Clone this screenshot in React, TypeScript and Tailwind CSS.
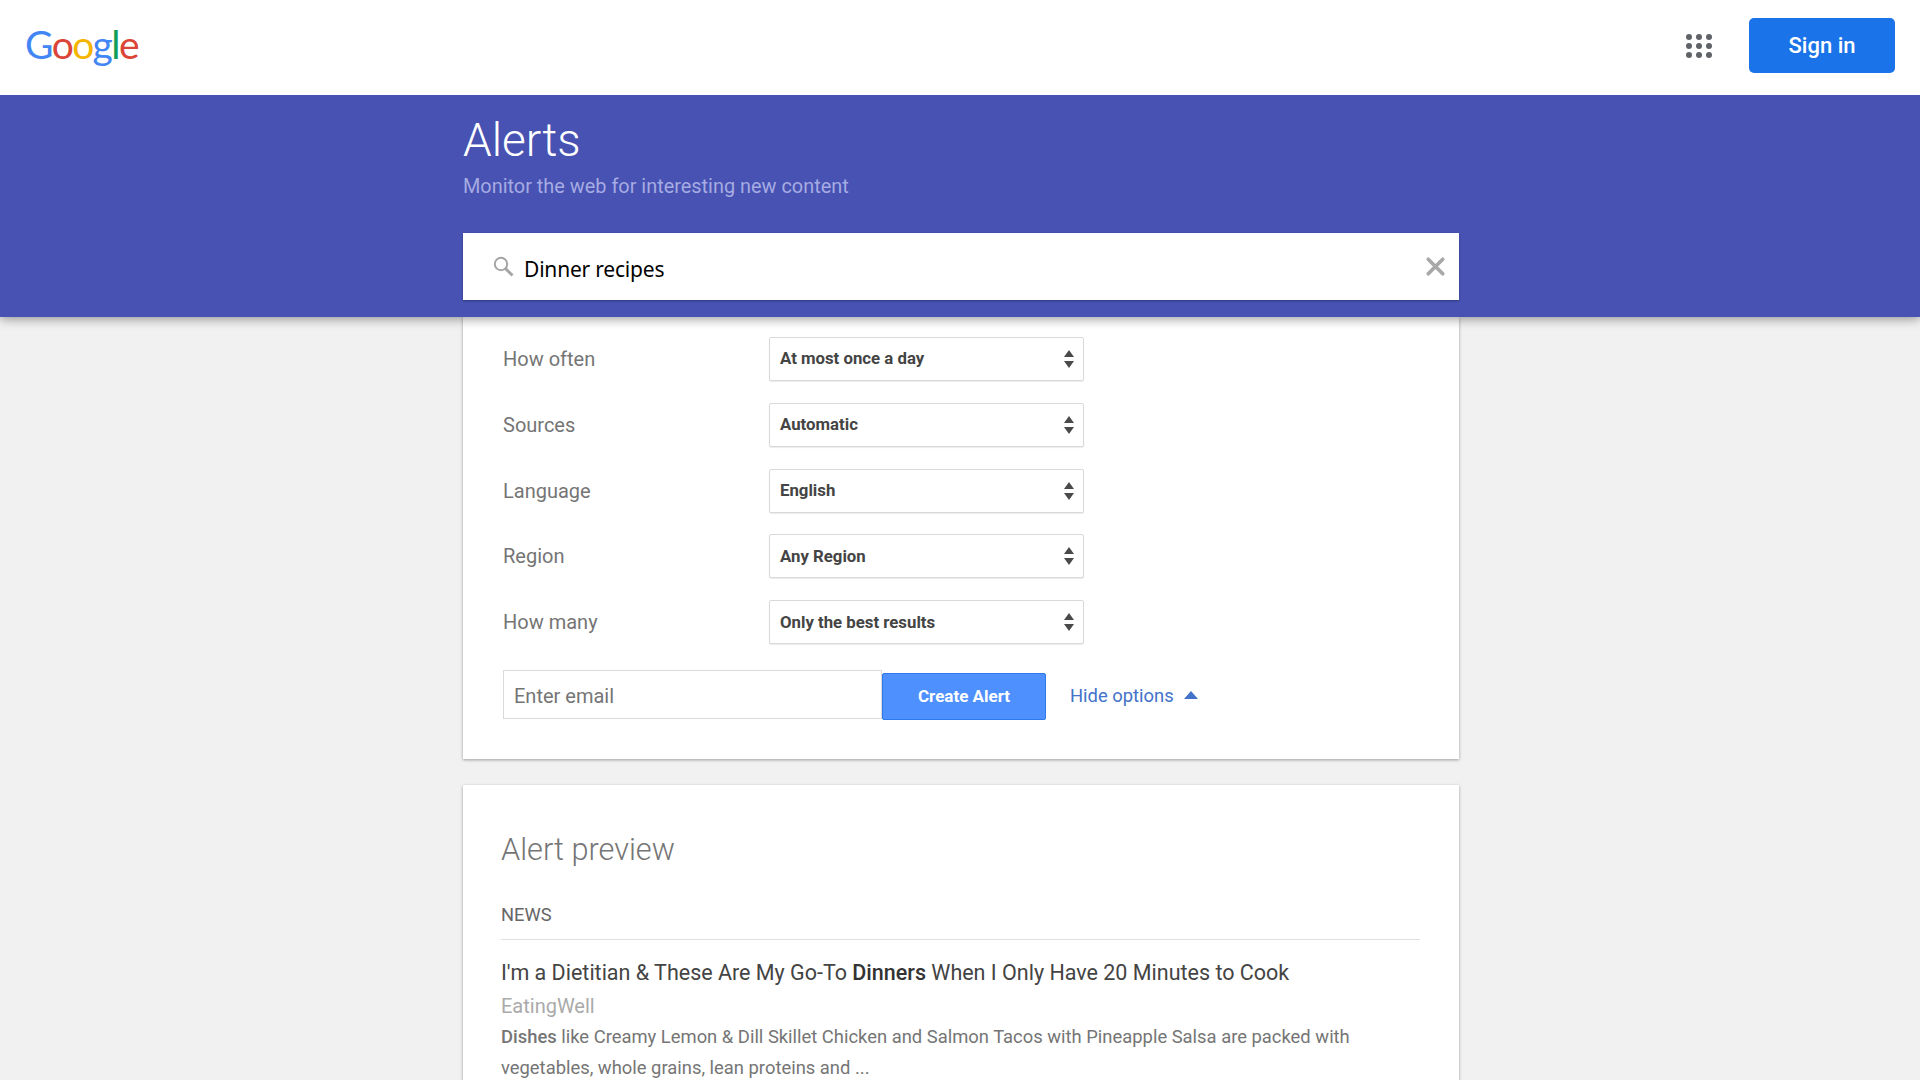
import { X } from "lucide-react"

const roboto = "font-['Roboto',sans-serif]"

const options = [
  { label: "How often", value: "At most once a day" },
  { label: "Sources", value: "Automatic" },
  { label: "Language", value: "English" },
  { label: "Region", value: "Any Region" },
  { label: "How many", value: "Only the best results" },
]

function GoogleLogo() {
  return (
    <div className="-mt-[3px] text-[39px] leading-none tracking-[-1.6px] font-['Lato',sans-serif] select-none">
      <span className="text-[#4285f4]">G</span>
      <span className="text-[#db4437]">o</span>
      <span className="text-[#f4b400]">o</span>
      <span className="text-[#4285f4]">g</span>
      <span className="text-[#0f9d58]">l</span>
      <span className="text-[#db4437]">e</span>
    </div>
  )
}

function AppsIcon() {
  return (
    <svg width="26" height="24" viewBox="0 0 26 24" fill="#5f6368">
      {[3, 12, 21].map((cy) =>
        [3, 13, 23].map((cx) => <circle key={`${cx}-${cy}`} cx={cx} cy={cy} r="3" />)
      )}
    </svg>
  )
}

function SearchIcon() {
  return (
    <svg width="21" height="21" viewBox="0 0 21 21" fill="none" stroke="#a5a5a5">
      <circle cx="8" cy="8" r="6.2" strokeWidth="2" />
      <path d="M12.6 12.6 L19.5 19.5" strokeWidth="3" />
    </svg>
  )
}

function SelectBox({ value }: { value: string }) {
  return (
    <div className="flex h-[44px] w-[315px] items-center justify-between rounded-[2px] border border-[#d9d9d9] bg-white pl-[10px] pr-[8px] shadow-[0_1px_1px_rgba(0,0,0,0.08)]">
      <span className="text-[16.8px] font-bold text-[#444444]">{value}</span>
      <svg width="12" height="20" viewBox="0 0 12 20" fill="#4a4a4a">
        <path d="M6 1 L11 8 L1 8 Z" />
        <path d="M1 12 L11 12 L6 19 Z" />
      </svg>
    </div>
  )
}

export default function App() {
  return (
    <div className={`h-screen overflow-hidden bg-[#f1f1f1] ${roboto}`}>
      {/* top bar */}
      <div className="relative z-20 flex h-[95px] items-center justify-between bg-white pb-[4px] pl-[25px] pr-[25px]">
        <GoogleLogo />
        <div className="flex items-center gap-[37px]">
          <AppsIcon />
          <button className="h-[55px] w-[146px] rounded-[5px] bg-[#1a73e8] text-[22px] font-medium text-white">
            Sign in
          </button>
        </div>
      </div>

      {/* purple header */}
      <div className="relative z-10 h-[222px] bg-[#4752b2] shadow-[0_2px_10px_rgba(0,0,0,0.4)]">
        <div className="ml-[463px] w-[996px] pt-[19px]">
          <h1 className="text-[46px] leading-[52px] font-light text-white">Alerts</h1>
          <p className="mt-[7px] text-[19.9px] leading-[28px] text-[#a6abe3]">
            Monitor the web for interesting new content
          </p>
          <div className="mt-[32px] flex h-[67px] items-center bg-white pl-[30px] pr-[9px] shadow-[0_1px_2px_rgba(0,0,0,0.3)]">
            <SearchIcon />
            <input
              defaultValue="Dinner recipes"
              className="ml-[10px] mt-[7px] flex-1 font-['Noto_Sans',sans-serif] text-[21px] tracking-[-0.2px] text-black outline-none"
            />
            <X size={29} strokeWidth={3} className="text-[#a8a8a8]" />
          </div>
        </div>
      </div>

      {/* options card */}
      <div className="ml-[463px] w-[996px] bg-white pb-[40px] pl-[40px] pt-[20px] shadow-[0_1px_3px_rgba(0,0,0,0.35)]">
        <div className="flex flex-col gap-[21.8px]">
          {options.map((o) => (
            <div key={o.label} className="flex items-center">
              <div className="w-[266px] text-[20px] text-[#757575]">{o.label}</div>
              <SelectBox value={o.value} />
            </div>
          ))}
        </div>
        <div className="mt-[26px] flex items-center">
          <input
            placeholder="Enter email"
            className="h-[49px] w-[379px] border border-[#d9d9d9] px-[10px] pt-[2px] text-[20px] outline-none placeholder:text-[#757575]"
          />
          <button className="h-[47px] w-[164px] translate-y-[2px] rounded-[2px] border border-[#3079ed] bg-[#4d90fe] text-[17px] font-bold text-white">
            Create Alert
          </button>
          <span className="ml-[24px] translate-y-[1px] text-[18.4px] text-[#4272c9]">Hide options</span>
          <svg width="14" height="8" viewBox="0 0 14 8" fill="#4272c9" className="ml-[10px]">
            <path d="M7 0 L14 8 L0 8 Z" />
          </svg>
        </div>
      </div>

      {/* preview card */}
      <div className="ml-[463px] mt-[26px] w-[996px] bg-white pl-[38px] pr-[39px] pt-[46px] shadow-[0_1px_3px_rgba(0,0,0,0.35)]">
        <h2 className="text-[30.7px] leading-[38px] font-light text-[#757575]">Alert preview</h2>
        <div className="mt-[34px] border-b border-[#e0e0e0] pb-[12px] text-[18.3px] leading-[24px] text-[#666666]">
          NEWS
        </div>
        <div className="mt-[18px] text-[21.5px] leading-[30px] text-[#444444]">
          I'm a Dietitian &amp; These Are My Go-To <b className="font-medium text-[#333333]">Dinners</b> When I Only
          Have 20 Minutes to Cook
        </div>
        <div className="mt-[3px] text-[20px] leading-[30px] text-[#aaaaaa]">EatingWell</div>
        <p className="mt-[1px] w-[919px] text-[18.4px] leading-[30.6px] text-[#757575]">
          <b className="font-medium">Dishes</b> like Creamy Lemon &amp; Dill Skillet Chicken and Salmon Tacos with
          Pineapple Salsa are packed with vegetables, whole grains, lean proteins and ...
        </p>
      </div>
    </div>
  )
}
